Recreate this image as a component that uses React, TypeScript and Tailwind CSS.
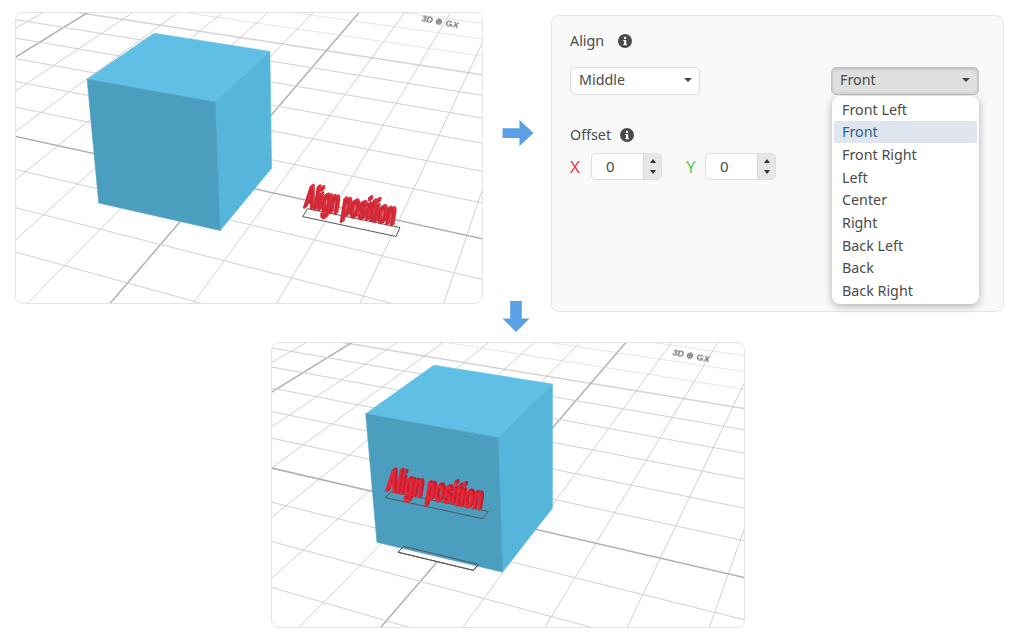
import React from "react";

type Pt = [number, number];

type SceneProps = {
  toPage: (p: Pt) => Pt;
  o: Pt;
  vpA: Pt;
  vpB: Pt;
  top: Pt[];
  front: Pt[];
  right: Pt[];
  frame: Pt[];
  groundFrame?: Pt[];
  label: { matrix: number[]; face: string; side: string };
  mark: string;
  viewBox: string;
};

const ALPHA = -0.0252;
const BETA = 0.0547;

const toPoints = (pts: Pt[]) => pts.map((p) => p.join(",")).join(" ");

const Scene = ({ toPage, o, vpA, vpB, top, front, right, frame, groundFrame, label, mark, viewBox }: SceneProps) => {
  const project = (u: number, v: number): Pt => {
    const a = ALPHA * u;
    const b = BETA * v;
    const w = 1 + a + b;
    return toPage([(o[0] + a * vpA[0] + b * vpB[0]) / w, (o[1] + a * vpA[1] + b * vpB[1]) / w]);
  };

  const lines: { from: Pt; to: Pt; major: boolean; far: boolean }[] = [];
  for (let u = -14; u <= 12; u++) {
    lines.push({ from: project(u, -8), to: project(u, 12), major: u === 0 || u === -6, far: false });
  }
  for (let v = -8; v <= 12; v++) {
    lines.push({ from: project(-14, v), to: project(12, v), major: v === 0 || v === 6, far: v > 5 });
  }

  return (
    <svg viewBox={viewBox} className="block h-full w-full blur-[0.4px]">
      <rect x="0" y="0" width="1024" height="644" fill="#fff" />
      {lines.map((l, i) => (
        <line
          key={i}
          x1={l.from[0]}
          y1={l.from[1]}
          x2={l.to[0]}
          y2={l.to[1]}
          stroke={l.major ? "#b0b0b0" : "#d0d0d0"}
          strokeWidth={l.major ? 1.5 : 1}
          opacity={l.far ? 0.55 : 1}
        />
      ))}
      {groundFrame && <polygon points={toPoints(groundFrame)} fill="#fff" stroke="#555" strokeWidth="1" />}
      <polygon points={toPoints(top)} fill="#60bfe4" stroke="#60bfe4" strokeWidth="0.6" />
      <polygon points={toPoints(right)} fill="#55b5da" stroke="#55b5da" strokeWidth="0.6" />
      <polygon points={toPoints(front)} fill="#4c9ebf" stroke="#4c9ebf" strokeWidth="0.6" />
      {groundFrame && <polygon points={toPoints(groundFrame)} fill="none" stroke="#555" strokeWidth="1" />}
      <polygon points={toPoints(frame)} fill="none" stroke="#555" strokeWidth="1" />
      {[4, 3, 2, 1, 0].map((i) => (
        <text
          key={i}
          transform={`matrix(${label.matrix.join(" ")})`}
          x={i * 0.8}
          y={-i * 0.4}
          fontFamily="'Liberation Sans', sans-serif"
          fontWeight="700"
          fontSize="20"
          fill={i === 0 ? label.face : label.side}
          stroke={i === 0 ? label.face : label.side}
          strokeWidth="0.5"
          aria-hidden={i !== 0}
        >
          Align position
        </text>
      ))}
      <text
        transform={mark}
        fontFamily="'Liberation Sans', sans-serif"
        fontWeight="700"
        fontSize="9"
        fill="#707070"
        className="blur-[0.6px]"
      >
        3D ⊕ GX
      </text>
    </svg>
  );
};

const InfoIcon = () => (
  <svg width="14" height="14" viewBox="0 0 14 14" className="shrink-0">
    <circle cx="7" cy="7" r="7" fill="#4a4a4a" />
    <rect x="6" y="6" width="2.2" height="5" fill="#fff" />
    <rect x="5.2" y="6" width="2" height="1" fill="#fff" />
    <rect x="5.2" y="10.2" width="3.8" height="1" fill="#fff" />
    <circle cx="7" cy="3.9" r="1.2" fill="#fff" />
  </svg>
);

const Caret = () => (
  <span className="h-0 w-0 border-x-[4px] border-t-[4px] border-x-transparent border-t-[#444]" />
);

const Stepper = ({ value }: { value: string }) => (
  <div className="flex h-[27px] w-[71px] overflow-hidden rounded-[5px] border border-[#dedede] bg-white">
    <div className="flex w-[51px] items-center pl-[14px] text-[15px] leading-none text-[#4a4a4a]">{value}</div>
    <div className="flex flex-1 flex-col items-center justify-center gap-[7px] border-l border-[#d8d8d8] bg-[#e6e6e6]">
      <span className="h-0 w-0 border-x-[3.5px] border-b-[4px] border-x-transparent border-b-[#333]" />
      <span className="h-0 w-0 border-x-[3.5px] border-t-[4px] border-x-transparent border-t-[#333]" />
    </div>
  </div>
);

const menuItems = ["Front Left", "Front", "Front Right", "Left", "Center", "Right", "Back Left", "Back", "Back Right"];

const firstScene = {
  toPage: (p: Pt): Pt => [p[0] / 3, p[1] / 3],
  o: [646, 541] as Pt,
  vpA: [-6126, -945] as Pt,
  vpB: [2000, -1041] as Pt,
  top: [[153.3, 32.3], [270, 50.7], [215, 101.7], [86, 78.7]] as Pt[],
  front: [[86, 78.7], [215, 101.7], [220, 231], [97.7, 203.3]] as Pt[],
  right: [[215, 101.7], [270, 50.7], [271.7, 168.3], [220, 231]] as Pt[],
  frame: [[303, 217], [397, 237], [401, 228], [308, 209]] as Pt[],
  label: { matrix: [0.68, 0.14, -0.25, 1.6, 303, 208], face: "#cc2a36", side: "#e0303e" },
  mark: "matrix(1 0.2 -0.3 1 422 20)",
  viewBox: "15 12 468 292",
};

const secondScene = {
  toPage: (p: Pt): Pt => [260 + p[0] / 3, 320 + p[1] / 3],
  o: [650, 587.6] as Pt,
  vpA: [-6126, -984] as Pt,
  vpB: [2042, -1030] as Pt,
  top: [[433.3, 364.3], [552.7, 383.3], [498.3, 437.3], [364.7, 413.3]] as Pt[],
  front: [[364.7, 413.3], [498.3, 437.3], [502.3, 572.7], [376, 542.7]] as Pt[],
  right: [[498.3, 437.3], [552.7, 383.3], [552.7, 508.3], [502.3, 572.7]] as Pt[],
  frame: [[384.3, 497.7], [482.7, 519], [488.3, 511.7], [390, 491.7]] as Pt[],
  groundFrame: [[397.3, 552.7], [473.3, 571], [478.3, 565], [402.7, 546.7]] as Pt[],
  label: { matrix: [0.72, 0.148, -0.25, 1.6, 384, 491], face: "#e8283a", side: "#c4202f" },
  mark: "matrix(1 0.2 -0.3 1 673 354)",
  viewBox: "271 342 474 286",
};

export default function App() {
  return (
    <div className="h-[644px] w-[1024px] overflow-hidden bg-white font-['Noto_Sans',sans-serif] text-[14.3px] text-[#4a4a4a]">
      <div className="flex h-[333px] pl-[15px] pt-3">
        <div className="h-[292px] w-[468px] overflow-hidden rounded-lg border border-[#e4e4e4]">
          <Scene {...firstScene} />
        </div>

        <div className="flex w-[68px] flex-col">
          <svg width="33" height="27" viewBox="0 0 33 27" className="ml-[19px] mt-[108px]">
            <path d="M0 8.5h17.5V0L32 13.5 17.5 27v-8.5H0z" fill="#5aa0e6" />
          </svg>
          <svg width="28" height="33" viewBox="0 0 28 33" className="ml-[19px] mt-[155px]">
            <path d="M8 0h12v18h8L14 32 0 18h8z" fill="#5aa0e6" />
          </svg>
        </div>

        <div className="relative mt-[3px] h-[297px] w-[453px] rounded-lg border border-[#e6e6e6] bg-[#f9f9f9] pl-[18px] pr-6 pt-[13px]">
          <div className="flex h-[24px] items-center gap-[14px]">
            <span>Align</span>
            <InfoIcon />
          </div>

          <div className="mt-[14px] flex justify-between">
            <div className="flex h-[28px] w-[130px] items-center justify-between rounded-[5px] border border-[#dedede] bg-white pb-[2px] pl-2 pr-[7px]">
              <span>Middle</span>
              <Caret />
            </div>
            <div className="flex h-[28px] w-[148px] items-center justify-between rounded-[5px] border border-[#c4c4c4] bg-[#e0e0e0] pb-[2px] pl-2 pr-[8px] shadow-[inset_0_1px_3px_rgba(0,0,0,0.2)]">
              <span>Front</span>
              <Caret />
            </div>
          </div>

          <div className="mt-[28px] flex h-[24px] items-center gap-[9px]">
            <span>Offset</span>
            <InfoIcon />
          </div>

          <div className="mt-[6px] flex items-center">
            <span className="w-[21px] text-[17px] text-[#ee3b3b]">X</span>
            <Stepper value="0" />
            <span className="ml-[24px] w-[19px] text-[17px] text-[#5fcc5f]">Y</span>
            <Stepper value="0" />
          </div>

          {/* open dropdown */}
          <div className="absolute left-[280px] top-[80px] w-[147px] rounded-lg bg-white p-[2px] shadow-[0_2px_8px_rgba(0,0,0,0.3)]">
            {menuItems.map((item) => (
              <div
                key={item}
                className={
                  item === "Front"
                    ? "flex h-[22.7px] items-center rounded-[3px] bg-[#dfe6ef] pl-[8px] text-[#2b5f8a]"
                    : "flex h-[22.7px] items-center pl-[8px]"
                }
              >
                {item}
              </div>
            ))}
          </div>
        </div>
      </div>

      <div className="ml-[271px] mt-[9px] h-[286px] w-[474px] overflow-hidden rounded-lg border border-[#e4e4e4]">
        <Scene {...secondScene} />
      </div>
    </div>
  );
}
